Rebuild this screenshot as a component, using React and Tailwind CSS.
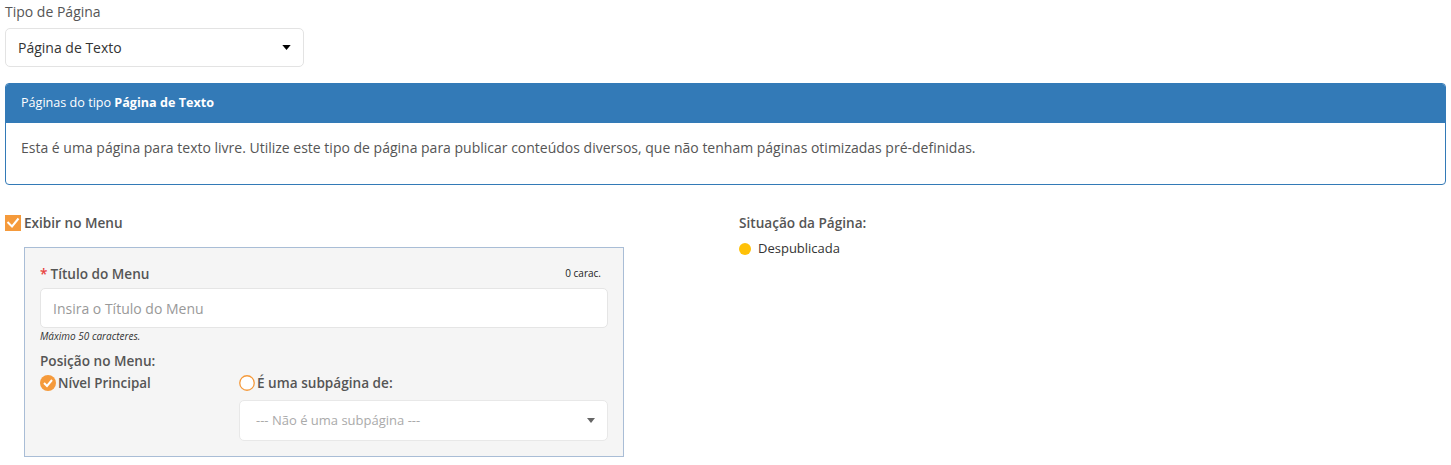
import React from 'react';

const font = { fontFamily: '"Open Sans", "Liberation Sans", sans-serif' };

const Caret = ({ className }) => (
  <svg viewBox="0 0 10 6" className={className}>
    <path d="M0 0h10L5 6z" fill="currentColor" />
  </svg>
);

const App = () => {
  return (
    <div className="w-[1451px] h-[465px] bg-white text-[14px] text-[#555]" style={font}>
      <div className="px-[5px] pt-[2px]">
        {/* Tipo de Pagina */}
        <label className="block text-[14px] leading-[20px] text-[#555] mb-[6px]">Tipo de Página</label>
        <div className="w-[299px] h-[39px] border border-[#e3e3e3] rounded-[5px] flex items-center justify-between pl-[12px] pr-[12px] text-[#333]">
          <span>Página de Texto</span>
          <Caret className="w-[9px] h-[5px] text-black" />
        </div>

        {/* Info panel */}
        <div className="mt-[16px] border border-[#337ab7] rounded-[4px] overflow-hidden">
          <div className="bg-[#337ab7] text-white text-[12.6px] h-[39px] flex items-center px-[15px]">
            Páginas do tipo&nbsp;<b className="font-bold">Página de Texto</b>
          </div>
          <div className="h-[61px] pt-[15px] px-[15px] text-[14px] leading-[20px] text-[#555]">
            Esta é uma página para texto livre. Utilize este tipo de página para publicar conteúdos diversos, que não tenham páginas otimizadas pré-definidas.
          </div>
        </div>

        {/* Bottom area */}
        <div className="grid grid-cols-[734px_1fr] mt-[28px]">
          <div>
            <div className="flex items-center h-[20px]">
              <span className="w-[16px] h-[16px] bg-[#f59a3b] flex items-center justify-center">
                <svg viewBox="0 0 16 16" className="w-[16px] h-[16px]">
                  <path d="M2.5 7l4.5 4.5 6.5-8" fill="none" stroke="white" strokeWidth="2" />
                </svg>
              </span>
              <span className="ml-[3px] font-semibold text-[13.6px] text-[#555]">Exibir no Menu</span>
            </div>

            <div className="ml-[19px] mt-[14px] w-[600px] h-[210px] bg-[#f5f5f5] border border-[#a9bdd6] px-[15px] pt-[16px]">
              <div className="flex items-end justify-between h-[20px]">
                <span className="font-semibold text-[13.6px] text-[#555]">
                  <span className="text-[#e8423e] mr-[3px]">*</span>Título do Menu
                </span>
                <span className="text-[10px] text-[#222] pr-[7px] mb-[3px]">0 carac.</span>
              </div>
              <div className="mt-[4px] h-[40px] bg-white border border-[#e5e5e5] rounded-[5px] flex items-center px-[12px] text-[#999]">
                Insira o Título do Menu
              </div>
              <div className="text-[10px] italic text-[#333] mt-[1px] leading-[14px]">Máximo 50 caracteres.</div>

              <div className="mt-[8px] font-semibold text-[13.6px] text-[#555] leading-[20px]">Posição no Menu:</div>
              <div className="flex mt-[2px]">
                <div className="w-[199px] flex items-center h-[20px]">
                  <svg viewBox="0 0 16 16" className="w-[16px] h-[16px]">
                    <circle cx="8" cy="8" r="8" fill="#f59a3b" />
                    <path d="M4 8l3 3 5-6" fill="none" stroke="white" strokeWidth="2" />
                  </svg>
                  <span className="ml-[2px] font-semibold text-[13.4px] text-[#555]">Nível Principal</span>
                </div>
                <div className="flex-1">
                  <div className="flex items-center h-[20px]">
                    <svg viewBox="0 0 16 16" className="w-[16px] h-[16px]">
                      <circle cx="8" cy="8" r="7.25" fill="white" stroke="#f59a3b" strokeWidth="1.3" />
                    </svg>
                    <span className="ml-[2px] font-semibold text-[13.6px] text-[#555]">É uma subpágina de:</span>
                  </div>
                  <div className="mt-[7px] h-[41px] bg-white border border-[#e8e8e8] rounded-[5px] flex items-center justify-between pl-[16px] pr-[12px] text-[13px] text-[#aaa]">
                    <span>--- Não é uma subpágina ---</span>
                    <Caret className="w-[8px] h-[5px] text-[#666]" />
                  </div>
                </div>
              </div>
            </div>
          </div>

          <div>
            <div className="font-semibold text-[13.6px] text-[#555] h-[20px] leading-[20px]">Situação da Página:</div>
            <div className="flex items-center mt-[6px]">
              <span className="w-[12px] h-[12px] rounded-full bg-[#ffc107]" />
              <span className="ml-[7px] text-[13px] text-[#333]">Despublicada</span>
            </div>
          </div>
        </div>
      </div>
    </div>
  );
};

export default App;
